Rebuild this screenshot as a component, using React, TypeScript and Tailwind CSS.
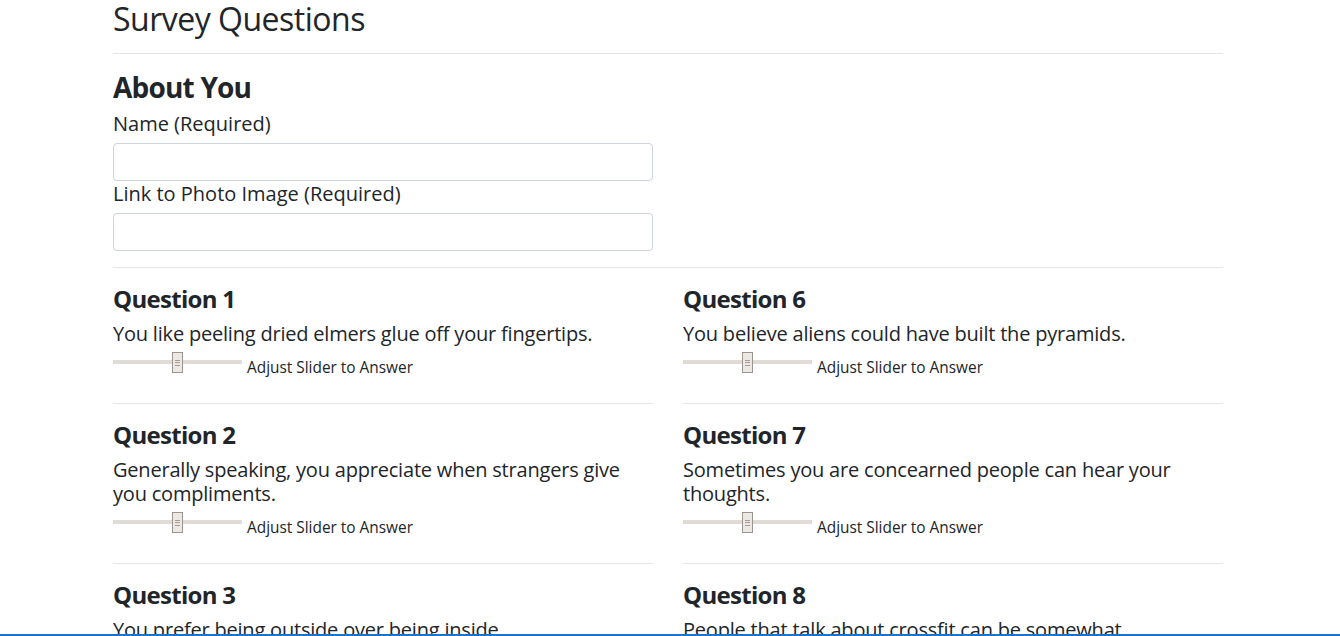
const leftQuestions = [
  { n: 1, text: "You like peeling dried elmers glue off your fingertips." },
  { n: 2, text: "Generally speaking, you appreciate when strangers give you compliments." },
  { n: 3, text: "You prefer being outside over being inside." },
  { n: 4, text: "You would rather read a book than watch the movie version." },
  { n: 5, text: "You secretly enjoy the smell of gasoline." },
];

const rightQuestions = [
  { n: 6, text: "You believe aliens could have built the pyramids." },
  { n: 7, text: "Sometimes you are concearned people can hear your thoughts." },
  { n: 8, text: "People that talk about crossfit can be somewhat insufferable." },
  { n: 9, text: "You have strong opinions about pineapple on pizza." },
  { n: 10, text: "You would volunteer to go to Mars on a one-way trip." },
];

function Slider() {
  return (
    <div className="relative h-[21px] w-[129px] shrink-0">
      <div className="absolute left-0 right-0 top-[8px] h-[4px] bg-[#e0dcd5]" />
      {/* thumb */}
      <div className="absolute left-[59px] top-0 flex h-[21px] w-[11px] flex-col items-center justify-center gap-[1.5px] border border-[#9c958f] bg-[#ece9e5]">
        <div className="h-px w-[5px] bg-[#a29c96]" />
        <div className="h-px w-[5px] bg-[#a29c96]" />
        <div className="h-px w-[5px] bg-[#a29c96]" />
      </div>
    </div>
  );
}

function Question({ n, text, last }: { n: number; text: string; last?: boolean }) {
  return (
    <div>
      <h4 className="mt-[16px] text-[24px] font-bold leading-[29px] tracking-[-0.7px]">Question {n}</h4>
      <p className="mt-[9px] text-[20px] leading-[24px] tracking-[-0.2px]">{text}</p>
      <div className="mt-[6px] flex h-[21px] items-start">
        <Slider />
        <span className="ml-[5px] mt-[7px] whitespace-nowrap text-[15.4px] leading-[18px]">Adjust Slider to Answer</span>
      </div>
      {!last && <hr className="mt-[30px] border-t border-black/10" />}
    </div>
  );
}

export default function App() {
  return (
    <div className="min-h-screen bg-white text-[#212529] font-['Open_Sans',sans-serif]">
      <div className="ml-[98px] w-[1140px] px-[15px]">
        <h2 className="text-[32px] leading-[38px] tracking-[-0.5px]">Survey Questions</h2>
        <hr className="mt-[15px] border-t border-black/10" />

        <h3 className="mt-[16px] text-[28px] font-bold leading-[34px] tracking-[-0.8px]">About You</h3>
        <label className="mt-[8px] block text-[20px] leading-[23px]">Name (Required)</label>
        <input className="mt-[8px] block h-[38px] w-[540px] rounded-[4px] border border-[#ced4da] px-3" />
        <label className="mt-[1px] block text-[20px] leading-[23px]">Link to Photo Image (Required)</label>
        <input className="mt-[8px] block h-[38px] w-[540px] rounded-[4px] border border-[#ced4da] px-3" />
        <hr className="mt-[16px] border-t border-black/10" />

        <div className="grid grid-cols-2 gap-x-[30px]">
          <div>
            {leftQuestions.map((q, i) => (
              <Question key={q.n} n={q.n} text={q.text} last={i === leftQuestions.length - 1} />
            ))}
          </div>
          <div>
            {rightQuestions.map((q, i) => (
              <Question key={q.n} n={q.n} text={q.text} last={i === rightQuestions.length - 1} />
            ))}
          </div>
        </div>
      </div>
      <div className="fixed bottom-0 left-0 right-0 h-[2px] bg-[#1b74c9]" />
    </div>
  );
}
